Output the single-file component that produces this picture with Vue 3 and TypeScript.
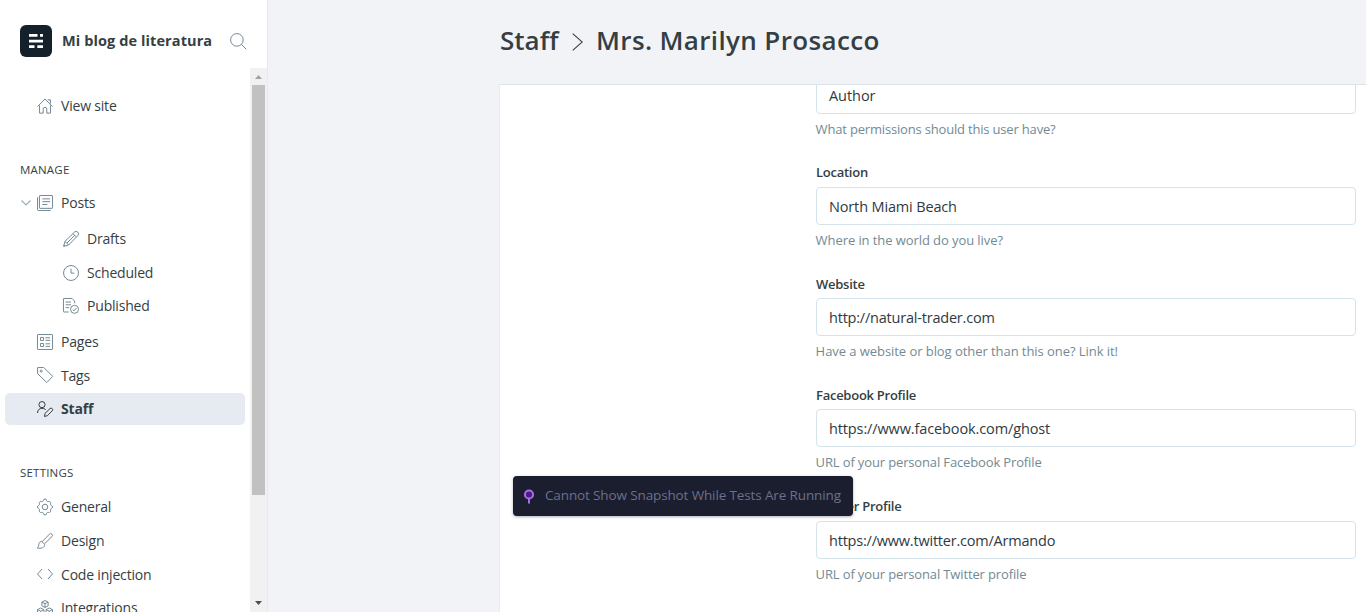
<script setup lang="ts">
interface NavItem {
  label: string
  icon: string
  active?: boolean
  children?: NavItem[]
}
interface Field {
  id: string
  label: string
  value: string
  hint: string
}

const manage: NavItem[] = [
  {
    label: 'Posts',
    icon: 'posts',
    children: [
      { label: 'Drafts', icon: 'pencil' },
      { label: 'Scheduled', icon: 'clock' },
      { label: 'Published', icon: 'published' },
    ],
  },
  { label: 'Pages', icon: 'pages' },
  { label: 'Tags', icon: 'tag' },
  { label: 'Staff', icon: 'staff', active: true },
]

const settings: NavItem[] = [
  { label: 'General', icon: 'gear' },
  { label: 'Design', icon: 'brush' },
  { label: 'Code injection', icon: 'code' },
  { label: 'Integrations', icon: 'modules' },
]

const icons: Record<string, string> = {
  house: 'M.8 12.8 12 1.500l11.200 11.300M3.800 11v11.700h5.500v-6a2.700 2.700 0 0 1 5.400 0v6h5.500V11M16 2.800h4.200v5.500',
  posts: 'M4.500.8h18a.8.8 0 0 1 .8.8v17.600a.8.8 0 0 1-.8.8h-18a.8.8 0 0 1-.8-.8V1.600a.8.8 0 0 1 .8-.8zM.8 3.500v18.600a1.100 1.100 0 0 0 1.100 1.100h18.600M8 5.800h11.500M8 10h11.500M8 14.200h7.500',
  pencil: 'M.9 23.100 3 15.500 17.200 1.700a3.600 3.600 0 0 1 5.100 5.100L8.500 21zM3 15.500 8.500 21M15 4l5 5M5.800 18.200 17.800 6.300M1.500 20.800l1.700 1.700',
  clock: 'M12 .8a11.200 11.200 0 1 0 0 22.400A11.200 11.200 0 1 0 12 .8zM12 5.500V12.200h5',
  published: 'M8.500 21H1.500a.8.8 0 0 1-.8-.8V1.500a.8.8 0 0 1 .8-.8h12l4 4V8M4 6h8M4 10.200h8M4 14.400h5M17.300 11a6 6 0 1 0 0 12 6 6 0 1 0 0-12zM14.500 17.300l2 2 3.700-4.300',
  pages: 'M1.500.8h21a.8.8 0 0 1 .8.8v20.800a.8.8 0 0 1-.8.8h-21a.8.8 0 0 1-.8-.8V1.600a.8.8 0 0 1 .8-.8zM5.200 5.200h4.500v4.500H5.200zM5.200 14.200h4.500v4.500H5.200zM12.700 5.700h7M12.700 9.500h7M12.700 14.700h7M12.700 18.500h7',
  tag: 'M1.500.8h8.700L23 13.600a.9.9 0 0 1 0 1.200L15.200 22.800a.9.9 0 0 1-1.200 0L.8 9.800V1.500a.7.7 0 0 1 .7-.7zM6.200 4.600a1.500 1.500 0 1 0 0 3 1.500 1.500 0 1 0 0-3z',
  staff: 'M7.500.8a4.600 4.600 0 1 0 0 9.200 4.600 4.600 0 1 0 0-9.200zM.8 18c0-4.500 2.700-7 6.700-7 2.500 0 4.600.8 5.700 2.500M11.200 23.200l.9-4.600 7.300-7.200a2.400 2.400 0 0 1 3.400 3.400L15.700 22z',
  gear: 'M9.600 2.400a2.400 2.400 0 0 1 4.800 0 2.400 2.400 0 0 0 3.300 1.400 2.300 2.300 0 0 1 2.600 3.300 2.200 2.200 0 0 0 1.300 2.600 2.400 2.400 0 0 1 0 4.600 2.200 2.200 0 0 0-1.300 2.600 2.300 2.300 0 0 1-2.900 3.200 2.300 2.300 0 0 0-3 1.400 2.400 2.400 0 0 1-4.800 0 2.300 2.300 0 0 0-3-1.400 2.300 2.300 0 0 1-2.900-3.200 2.200 2.200 0 0 0-1.300-2.600 2.400 2.400 0 0 1 0-4.600 2.200 2.200 0 0 0 1.300-2.600 2.300 2.300 0 0 1 2.600-3.300 2.400 2.400 0 0 0 3.300-1.400zM12 7.800a4.200 4.200 0 1 0 0 8.400 4.200 4.200 0 1 0 0-8.400z',
  brush: 'M7.800 13 18.700 1.700a2.600 2.600 0 0 1 3.700 3.700L11.200 16.300M7 12.600l4.500 4.300M7 12.600c-2.500.2-4 1.900-4.300 4.600-.2 2.100-.7 4-2 5.500 5 .9 11.300-.5 10.800-5.800',
  code: 'M7.500 4.500 0.800 12l6.700 7.500M16.500 4.500l6.700 7.500-6.700 7.500',
  modules: 'M12 .8l4.700 2.400v5.600L12 11.200 7.300 8.800V3.200zM7.300 3.200l4.700 2.300 4.700-2.300M12 5.500v5.700M5.600 12l4.800 2.400V20l-4.800 2.700L.8 20v-5.600zM.8 14.400l4.800 2.400 4.800-2.400M5.600 16.800v6M18.400 12l4.800 2.400V20l-4.800 2.700-4.800-2.700v-5.600zM13.600 14.400l4.800 2.400 4.800-2.400M18.400 16.800v6',
}

const fields: Field[] = [
  { id: 'role', label: 'Role', value: 'Author', hint: 'What permissions should this user have?' },
  { id: 'location', label: 'Location', value: 'North Miami Beach', hint: 'Where in the world do you live?' },
  { id: 'website', label: 'Website', value: 'http://natural-trader.com', hint: 'Have a website or blog other than this one? Link it!' },
  { id: 'facebook', label: 'Facebook Profile', value: 'https://www.facebook.com/ghost', hint: 'URL of your personal Facebook Profile' },
  { id: 'twitter', label: 'Twitter Profile', value: 'https://www.twitter.com/Armando', hint: 'URL of your personal Twitter profile' },
]
</script>

<template>
  <div class="app">
    <aside class="sidebar">
      <header class="brand">
        <span class="logo">
          <svg width="32" height="32" viewBox="0 0 32 32" fill="#fff">
            <path d="M9 9h8.500v2.700H9zM20 9h3v2.700h-3zM9 14.800h14v2.700H9zM9 20.300h5.500V23H9zM17.300 20.300H23V23h-5.700z" />
          </svg>
        </span>
        <span class="blog-name">Mi blog de literatura</span>
        <svg class="search" width="17" height="17" viewBox="0 0 17 17">
          <circle cx="6.900" cy="6.900" r="6.300" /><path d="M11.400 11.400 16.300 16.300" />
        </svg>
      </header>
      <div class="nav-wrap">
        <nav class="nav">
          <a class="item view"><svg class="icon" viewBox="0 0 24 24"><path :d="icons.house" /></svg><span>View site</span></a>
          <h2 class="heading">Manage</h2>
          <template v-for="item in manage" :key="item.label">
            <a class="item" :class="{ active: item.active }">
              <svg v-if="item.children" class="chevron" width="10" height="6" viewBox="0 0 10 6"><path d="M.5.5 5 5 9.500.5" /></svg>
              <svg class="icon" viewBox="0 0 24 24"><path :d="icons[item.icon]" /></svg><span>{{ item.label }}</span>
            </a>
            <div v-if="item.children" class="sub">
              <a v-for="child in item.children" :key="child.label" class="item">
                <svg class="icon" viewBox="0 0 24 24"><path :d="icons[child.icon]" /></svg><span>{{ child.label }}</span>
              </a>
            </div>
          </template>
          <h2 class="heading second">Settings</h2>
          <a v-for="item in settings" :key="item.label" class="item">
            <svg class="icon" viewBox="0 0 24 24"><path :d="icons[item.icon]" /></svg><span>{{ item.label }}</span>
          </a>
        </nav>
        <div class="scrollbar">
          <svg class="arrow up" width="17" height="17" viewBox="0 0 17 17"><path d="M5 11h7L8.500 7z" /></svg>
          <div class="thumb"></div>
          <svg class="arrow down" width="17" height="17" viewBox="0 0 17 17"><path d="M5 6h7L8.500 10z" /></svg>
        </div>
      </div>
    </aside>
    <main class="main">
      <h1 class="title">
        <span class="crumb">Staff</span>
        <svg class="sep" width="11" height="18" viewBox="0 0 11 18"><path d="M.7.7 10.300 9 .7 17.300" /></svg>
        <span class="person">Mrs. Marilyn Prosacco</span>
      </h1>
      <section class="panel">
        <form class="form">
          <div v-for="f in fields" :key="f.id" class="field" :class="f.id">
            <label class="label">{{ f.label }}</label>
            <div class="input">{{ f.value }}</div>
            <p class="hint">{{ f.hint }}</p>
          </div>
        </form>
      </section>
    </main>
    <div class="snapshot">
      <svg width="12" height="15" viewBox="0 0 12 15">
        <path d="M6 9v5.500" /><circle cx="6" cy="5.500" r="4.100" />
      </svg>
      <span>Cannot Show Snapshot While Tests Are Running</span>
    </div>
  </div>
</template>

<style>
body { margin: 0; overflow: hidden; }
</style>

<style scoped>
.app {
  position: relative;
  display: flex;
  width: 1366px;
  height: 612px;
  overflow: hidden;
  background: #f2f3f7;
  color: #343f44;
  font-family: "Open Sans", "Noto Sans", sans-serif;
}
.sidebar {
  box-sizing: border-box;
  width: 268px;
  flex: none;
  display: flex;
  flex-direction: column;
  background: #fff;
  border-right: 1px solid #e5eaef;
}
.brand {
  height: 68px;
  flex: none;
  display: flex;
  align-items: flex-start;
  padding: 25px 0 0 20px;
  box-sizing: border-box;
}
.logo {
  width: 32px;
  height: 32px;
  border-radius: 6px;
  background: #15212a;
}
.blog-name {
  margin-left: 10px;
  width: 168px;
  line-height: 32px;
  font-size: 14.500px;
  font-weight: 700;
  letter-spacing: 0.100px;
  white-space: nowrap;
}
.search { margin-top: 8px; fill: none; stroke: #738a94; stroke-width: 1; }
.nav-wrap { flex: 1; min-height: 0; display: flex; }
.nav { width: 250px; overflow: hidden; }
.item {
  position: relative;
  box-sizing: border-box;
  display: flex;
  align-items: center;
  height: 32px;
  margin: 0 5px 1.600px;
  padding-left: 32px;
  border-radius: 5px;
  font-size: 14px;
  line-height: 20px;
  letter-spacing: -0.190px;
  color: #343f44;
  white-space: nowrap;
}
.item span { margin-left: 8px; padding-top: 0.600px; }
.item.view { margin-top: 22px; margin-bottom: 0; }
.item.active { background: #e6ebf2; font-weight: 700; }
.icon {
  width: 16px;
  height: 16px;
  flex: none;
  fill: none;
  stroke: #738a94;
  stroke-width: 1.500;
  stroke-linejoin: round;
  overflow: visible;
}
.active .icon { stroke: #343f44; }
.chevron { position: absolute; left: 16px; top: 13px; fill: none; stroke: #9baeb8; stroke-width: 1.200; }
.sub { padding: 2.400px 0 2px; }
.sub .item { padding-left: 58px; }
.heading {
  margin: 38px 0 7px 20px;
  line-height: 20px;
  font-size: 11.500px;
  font-weight: 500;
  letter-spacing: 0.200px;
  text-transform: uppercase;
}
.heading.second { margin-top: 38.200px; margin-bottom: 8px; }
.scrollbar {
  width: 17px;
  display: flex;
  flex-direction: column;
  background: #f1f1f1;
}
.arrow { flex: none; display: block; }
.up { fill: #a3a3a3; }
.down { fill: #505050; margin-top: auto; }
.thumb { height: 410px; margin: 0 2px; background: #c1c1c1; }
.main { flex: 1; min-width: 0; display: flex; flex-direction: column; padding-left: 231px; }
.title {
  display: flex;
  align-items: center;
  height: 84px;
  margin: 0;
  font-size: 26px;
  font-weight: 600;
  line-height: 36px;
  white-space: nowrap;
}
.crumb { width: 72px; margin-left: 1px; padding-bottom: 4px; }
.sep { width: 11px; margin-right: 13px; fill: none; stroke: #343f44; stroke-width: 1.100; }
.person { padding-bottom: 4px; letter-spacing: 0.360px; }
.panel {
  flex: 1;
  min-height: 0;
  overflow: hidden;
  background: #fff;
  border-top: 1px solid #dae4ea;
  border-left: 1px solid #e6ecf1;
}
.form { margin: -32.660px 10px 0 316px; }
.field { height: 111.330px; }
.field.role { height: 110.830px; }
.label {
  display: block;
  line-height: 18px;
  font-size: 13px;
  font-weight: 600;
  letter-spacing: -0.260px;
  margin-bottom: 5.500px;
}
.input {
  box-sizing: border-box;
  height: 38px;
  padding: 0 12px;
  border: 1px solid #d5e3ec;
  border-radius: 4px;
  line-height: 37px;
  font-size: 14.500px;
  letter-spacing: -0.150px;
  color: #2f3a3f;
}
.hint {
  margin: 6.100px 0 0 -0.400px;
  line-height: 18px;
  font-size: 13px;
  letter-spacing: -0.140px;
  color: #738a94;
}
.role .input { letter-spacing: -0.050px; }
.role .hint { letter-spacing: -0.180px; }
.location .hint { letter-spacing: -0.080px; }
.website .input, .twitter .input { letter-spacing: -0.210px; }
.website .hint { letter-spacing: -0.060px; }
.facebook .input { letter-spacing: -0.120px; }
.snapshot {
  position: absolute;
  left: 513px;
  top: 476px;
  box-sizing: border-box;
  width: 340px;
  height: 40px;
  display: flex;
  align-items: center;
  padding-left: 10px;
  border-radius: 4px;
  background: #1b1e2e;
  box-shadow: 0 1px 3px rgba(27, 30, 46, 0.350);
  color: #6c708b;
  font-size: 13.500px;
  letter-spacing: -0.130px;
  white-space: nowrap;
}
.snapshot svg { flex: none; fill: #4b1c82; stroke: #a86fe8; stroke-width: 2; }
.snapshot span { margin-left: 10px; padding-bottom: 2px; }
</style>
